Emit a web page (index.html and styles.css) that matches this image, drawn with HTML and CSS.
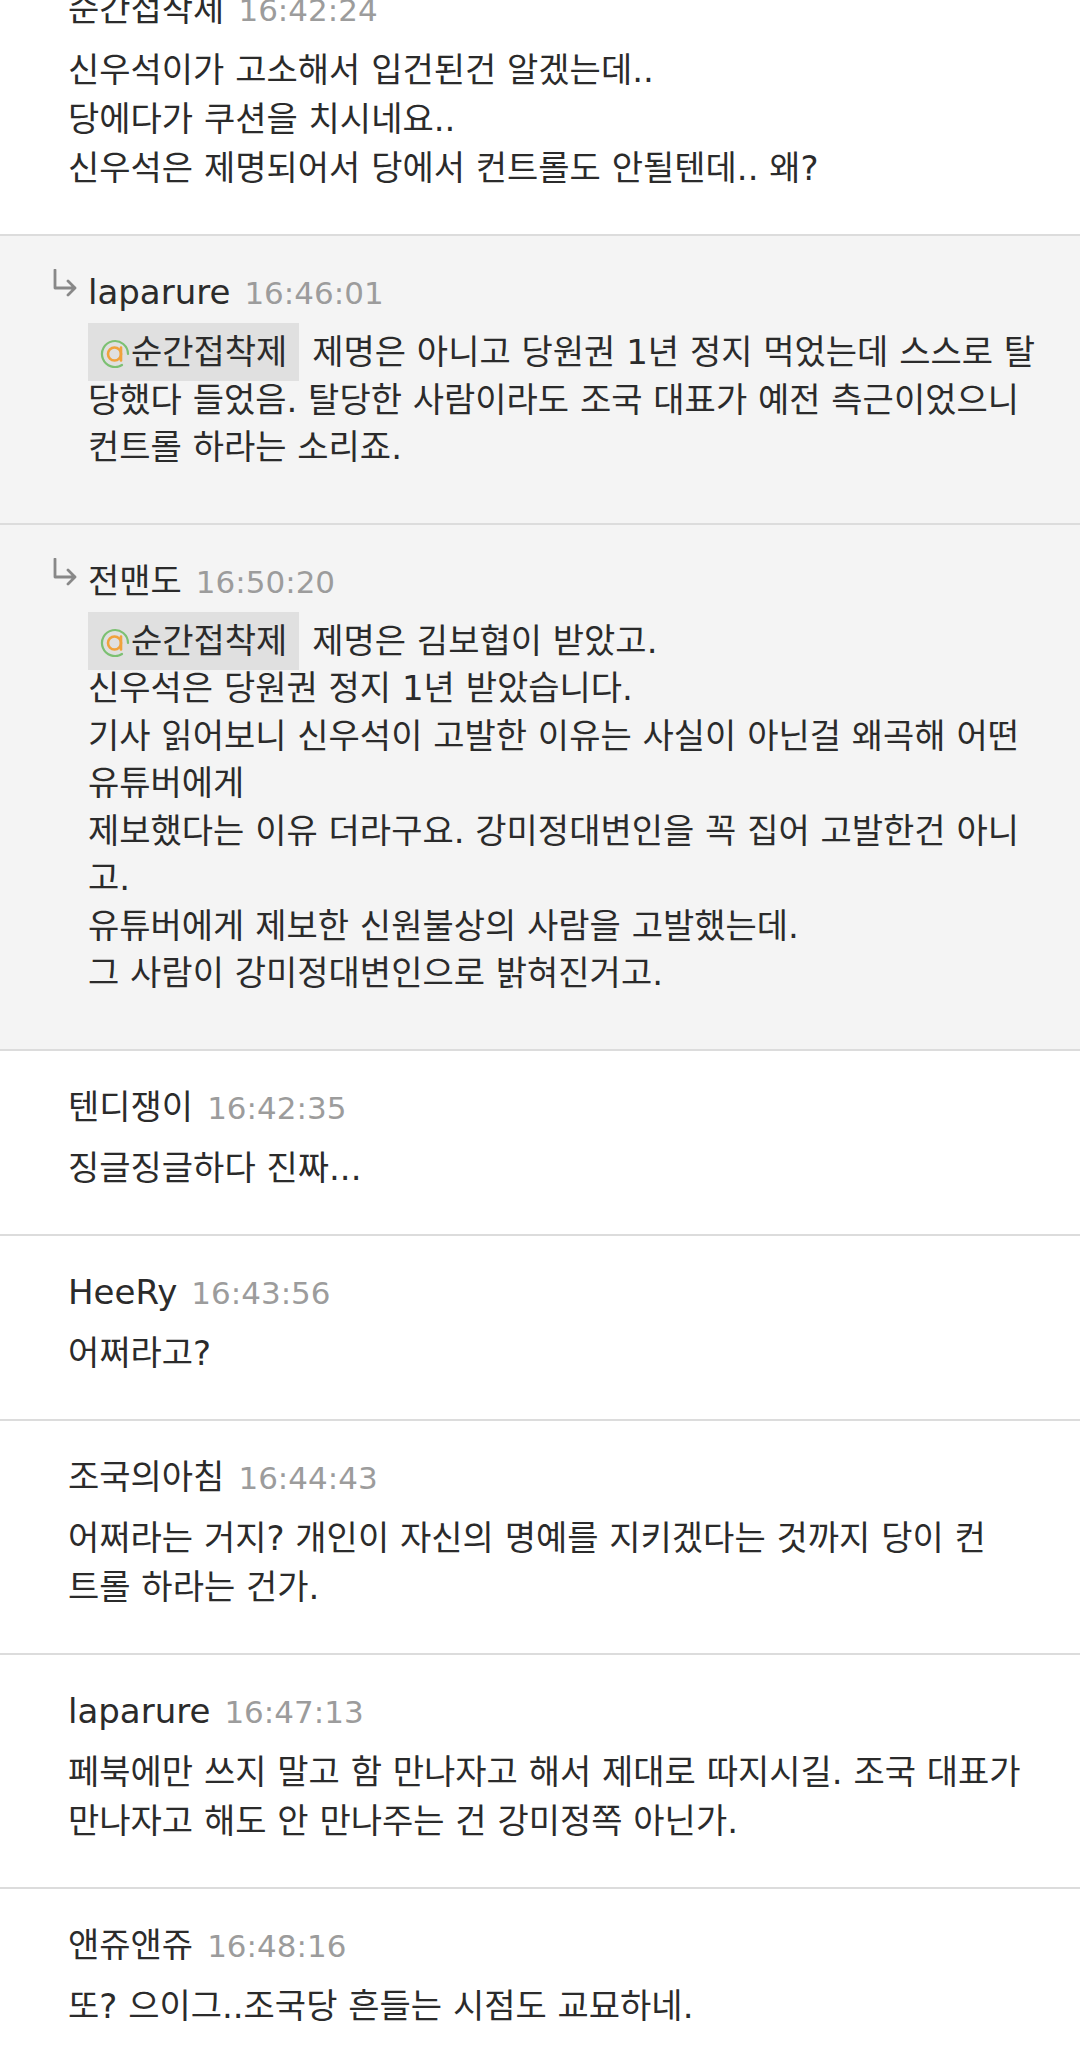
FILE: index.html
```html
<!doctype html>
<html lang="ko">

<head>
    <meta charset="utf-8">
    <meta name="viewport" content="width=device-width, initial-scale=1">
    <title>댓글</title>
    <link rel="stylesheet" href="styles.css">
</head>

<body>
    <div class="thread">

        <div class="post">
            <div class="post-head">
                <span class="post-name">순간접착제</span>
                <span class="post-time">16:42:24</span>
            </div>
            <div class="post-body">
                신우석이가 고소해서 입건된건 알겠는데..<br>
                당에다가 쿠션을 치시네요..<br>
                신우석은 제명되어서 당에서 컨트롤도 안될텐데.. 왜?
            </div>
        </div>

        <div class="post reply">
            <div class="post-head">
                <svg class="reply-arrow" width="26" height="28" viewBox="0 0 26 28">
                    <path d="M3 1 V19 H23 M16 12 L23 19 L16 26" fill="none" stroke="#888" stroke-width="2.8" stroke-linecap="round" stroke-linejoin="round"/>
                </svg>
                <span class="post-name">laparure</span>
                <span class="post-time">16:46:01</span>
            </div>
            <div class="post-body">
                <span class="mention"><svg class="mention-icon" width="30" height="30" viewBox="0 0 30 30">
                    <path d="M22 27 A13 13 0 1 1 28 16" fill="none" stroke="#7cc072" stroke-width="2.2" stroke-linecap="round"/>
                    <circle cx="14.5" cy="16" r="6.5" fill="none" stroke="#f0a23c" stroke-width="2.6"/>
                    <path d="M21 9.5 V22.5" stroke="#f0a23c" stroke-width="2.6" stroke-linecap="round"/>
                </svg>순간접착제</span> 제명은 아니고 당원권 1년 정지 먹었는데 스스로 탈<br>
                당했다 들었음. 탈당한 사람이라도 조국 대표가 예전 측근이었으니<br>
                컨트롤 하라는 소리죠.
            </div>
        </div>

        <div class="post reply">
            <div class="post-head">
                <svg class="reply-arrow" width="26" height="28" viewBox="0 0 26 28">
                    <path d="M3 1 V19 H23 M16 12 L23 19 L16 26" fill="none" stroke="#888" stroke-width="2.8" stroke-linecap="round" stroke-linejoin="round"/>
                </svg>
                <span class="post-name">전맨도</span>
                <span class="post-time">16:50:20</span>
            </div>
            <div class="post-body">
                <span class="mention"><svg class="mention-icon" width="30" height="30" viewBox="0 0 30 30">
                    <path d="M22 27 A13 13 0 1 1 28 16" fill="none" stroke="#7cc072" stroke-width="2.2" stroke-linecap="round"/>
                    <circle cx="14.5" cy="16" r="6.5" fill="none" stroke="#f0a23c" stroke-width="2.6"/>
                    <path d="M21 9.5 V22.5" stroke="#f0a23c" stroke-width="2.6" stroke-linecap="round"/>
                </svg>순간접착제</span> 제명은 김보협이 받았고.<br>
                신우석은 당원권 정지 1년 받았습니다.<br>
                기사 읽어보니 신우석이 고발한 이유는 사실이 아닌걸 왜곡해 어떤<br>
                유튜버에게<br>
                제보했다는 이유 더라구요. 강미정대변인을 꼭 집어 고발한건 아니<br>
                고.<br>
                유튜버에게 제보한 신원불상의 사람을 고발했는데.<br>
                그 사람이 강미정대변인으로 밝혀진거고.
            </div>
        </div>

        <div class="post">
            <div class="post-head">
                <span class="post-name">텐디쟁이</span>
                <span class="post-time">16:42:35</span>
            </div>
            <div class="post-body">징글징글하다 진짜...</div>
        </div>

        <div class="post">
            <div class="post-head">
                <span class="post-name">HeeRy</span>
                <span class="post-time">16:43:56</span>
            </div>
            <div class="post-body">어쩌라고?</div>
        </div>

        <div class="post">
            <div class="post-head">
                <span class="post-name">조국의아침</span>
                <span class="post-time">16:44:43</span>
            </div>
            <div class="post-body">
                어쩌라는 거지? 개인이 자신의 명예를 지키겠다는 것까지 당이 컨<br>
                트롤 하라는 건가.
            </div>
        </div>

        <div class="post">
            <div class="post-head">
                <span class="post-name">laparure</span>
                <span class="post-time">16:47:13</span>
            </div>
            <div class="post-body">
                페북에만 쓰지 말고 함 만나자고 해서 제대로 따지시길. 조국 대표가<br>
                만나자고 해도 안 만나주는 건 강미정쪽 아닌가.
            </div>
        </div>

        <div class="post">
            <div class="post-head">
                <span class="post-name">앤쥬앤쥬</span>
                <span class="post-time">16:48:16</span>
            </div>
            <div class="post-body">또? 으이그..조국당 흔들는 시점도 교묘하네.</div>
        </div>

    </div>
</body>

</html>
```

FILE: styles.css
```css
body{
   margin: 0;
   background: #fff;
   color: #2b2b2b;
   font-family: "DejaVu Sans", "Noto Sans CJK KR", sans-serif;
   font-size: 34px;
   overflow: hidden;
}

/* list is scrolled a bit, first post starts above the top edge */
.thread{
   margin-top: -47px;
}

.post{
   padding: 32px 12px 41px 68px;
   border-bottom: 2px solid #dcdcdc;
   background: #fff;
}

.post-head{
   display: flex;
   align-items: baseline;
   line-height: 48px;
}

.post-time{
   margin-left: 14px;
   color: #9c9c9c;
   font-size: 31px;
}

.post-body{
   margin-top: 12px;
   line-height: 49px;
}

.reply{
   background: #f4f4f4;
   padding-left: 52px;
   padding-bottom: 51px;
}

.reply .post-body{
   padding-left: 36px;
   line-height: 47.5px;
}

.reply-arrow{
   align-self: flex-start;
   margin-top: 1px;
   margin-right: 10px;
}

.mention{
   background: #e0e0e0;
   padding: 9px 12px 9px 12px;
   margin-right: 2px;
}

.mention-icon{
   vertical-align: -4px;
   margin-right: 1px;
}
```
